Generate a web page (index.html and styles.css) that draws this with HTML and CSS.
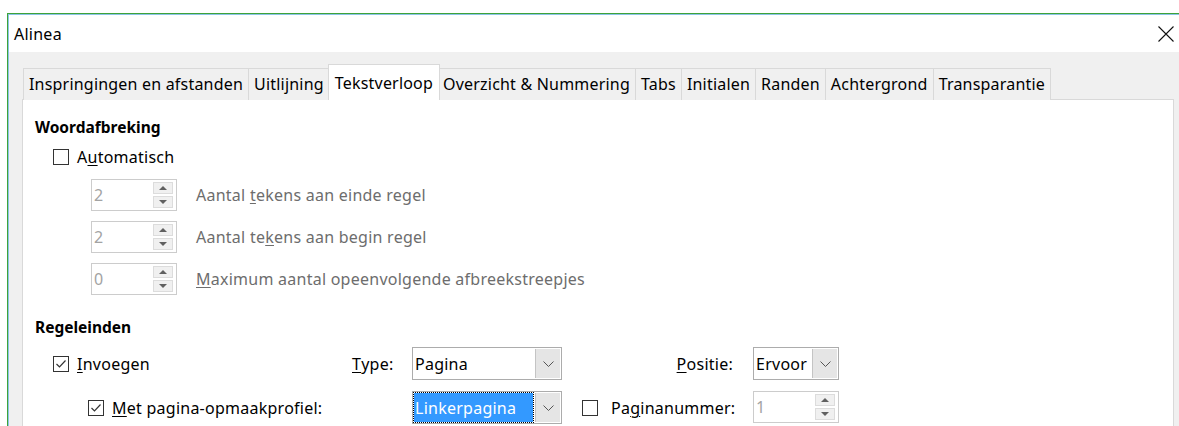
FILE: index.html
```html
<!DOCTYPE html>
<html lang="nl">
<head>
<meta charset="utf-8">
<title>Alinea</title>
<link rel="stylesheet" href="styles.css">
</head>
<body>
<div class="window">
  <div class="frame">
    <div class="titlebar">
      <span class="title">Alinea</span>
      <span class="close" aria-label="Sluiten">
        <svg width="16" height="16" viewBox="0 0 16 16"><path d="M0.5 0.5 L15.5 15.5 M15.5 0.5 L0.5 15.5" stroke="#111" stroke-width="1.1" fill="none"/></svg>
      </span>
    </div>
    <div class="client">
      <div class="tabs">
        <div class="tab">Inspringingen en afstanden</div>
        <div class="tab">Uitlijning</div>
        <div class="tab active">Tekstverloop</div>
        <div class="tab">Overzicht &amp; Nummering</div>
        <div class="tab">Tabs</div>
        <div class="tab">Initialen</div>
        <div class="tab">Randen</div>
        <div class="tab">Achtergrond</div>
        <div class="tab">Transparantie</div>
      </div>
      <div class="panel">
        <h2 class="group-title">Woordafbreking</h2>
        <div class="check-row">
          <span class="checkbox"></span>
          <span>A<u>u</u>tomatisch</span>
        </div>
        <div class="spin-row first">
          <div class="spin disabled">
            <span class="spin-value">2</span>
            <span class="spin-btns"><span class="spin-btn"><i class="arrow-up"></i></span><span class="spin-btn"><i class="arrow-down"></i></span></span>
          </div>
          <span class="spin-label">Aantal <u>t</u>ekens aan einde regel</span>
        </div>
        <div class="spin-row">
          <div class="spin disabled">
            <span class="spin-value">2</span>
            <span class="spin-btns"><span class="spin-btn"><i class="arrow-up"></i></span><span class="spin-btn"><i class="arrow-down"></i></span></span>
          </div>
          <span class="spin-label">Aantal te<u>k</u>ens aan begin regel</span>
        </div>
        <div class="spin-row">
          <div class="spin disabled">
            <span class="spin-value">0</span>
            <span class="spin-btns"><span class="spin-btn"><i class="arrow-up"></i></span><span class="spin-btn"><i class="arrow-down"></i></span></span>
          </div>
          <span class="spin-label"><u>M</u>aximum aantal opeenvolgende afbreekstreepjes</span>
        </div>

        <h2 class="group-title second">Regeleinden</h2>
        <div class="breaks">
          <div class="cell check-cell">
            <span class="checkbox checked"><svg width="14" height="14" viewBox="0 0 14 14"><path d="M2.5 7 L5.5 10 L11.5 3.5" stroke="#333" stroke-width="1.2" fill="none"/></svg></span>
            <span><u>I</u>nvoegen</span>
          </div>
          <div class="cell"><u>T</u>ype:</div>
          <div class="combo">
            <span class="combo-field">Pagina</span>
            <span class="combo-btn"><svg width="11" height="6" viewBox="0 0 11 6"><path d="M0.5 0.5 L5.5 5.5 L10.5 0.5" stroke="#555" fill="none"/></svg></span>
          </div>
          <div class="cell end"><u>P</u>ositie:</div>
          <div class="combo">
            <span class="combo-field">Ervoor</span>
            <span class="combo-btn"><svg width="11" height="6" viewBox="0 0 11 6"><path d="M0.5 0.5 L5.5 5.5 L10.5 0.5" stroke="#555" fill="none"/></svg></span>
          </div>

          <div class="cell check-cell nested">
            <span class="checkbox checked"><svg width="14" height="14" viewBox="0 0 14 14"><path d="M2.5 7 L5.5 10 L11.5 3.5" stroke="#333" stroke-width="1.2" fill="none"/></svg></span>
            <span><u>M</u>et pagina-opmaakprofiel:</span>
          </div>
          <div class="cell"></div>
          <div class="combo focused">
            <span class="combo-field selected">Linkerpagina</span>
            <span class="combo-btn"><svg width="11" height="6" viewBox="0 0 11 6"><path d="M0.5 0.5 L5.5 5.5 L10.5 0.5" stroke="#555" fill="none"/></svg></span>
          </div>
          <div class="cell check-cell page-no">
            <span class="checkbox"></span>
            <span>Pa<u>g</u>inanummer:</span>
          </div>
          <div class="spin disabled">
            <span class="spin-value">1</span>
            <span class="spin-btns"><span class="spin-btn"><i class="arrow-up"></i></span><span class="spin-btn"><i class="arrow-down"></i></span></span>
          </div>
        </div>
      </div>
    </div>
  </div>
</div>
</body>
</html>
```

FILE: styles.css
```css
* {
  box-sizing: border-box;
}

html,
body {
  margin: 0;
}

body {
  background: #fff;
  overflow: hidden;
  padding-top: 13px;
  font-family: "Noto Sans", "Open Sans", "DejaVu Sans", sans-serif;
  font-size: 16px;
  letter-spacing: 0.25px;
  color: #000;
}

u {
  text-decoration-thickness: 1px;
  text-underline-offset: 2px;
}

/* dialog frame: accent border with a light inner edge */
.window {
  margin-left: 7px;
  width: 1181px;
  border: 1px solid #3ea33a;
  border-bottom: 0;
}

.frame {
  border-top: 1px solid #8cc4e6;
  border-left: 1px solid #8cc4e6;
}

.titlebar {
  height: 37px;
  background: #fff;
  display: flex;
  align-items: center;
  justify-content: space-between;
  padding-left: 5px;
  padding-right: 13px;
}

.close {
  display: flex;
}

.client {
  background: #f0f0f0;
  padding: 12px 13px 0 13px;
}

/* tab strip */
.tabs {
  display: flex;
  align-items: flex-end;
  height: 36px;
  margin-bottom: -1px;
  padding-left: 1px;
  position: relative;
  z-index: 1;
  letter-spacing: 0.2px;
}

.tab {
  height: 32px;
  line-height: 30px;
  padding: 0 5px;
  background: #f0f0f0;
  border: 1px solid #d9d9d9;
  border-bottom: 0;
  margin-left: -1px;
  white-space: nowrap;
}

.tab:first-child {
  margin-left: 0;
}

.tab.active {
  height: 36px;
  padding: 3px 6px 2px;
  margin: 0 -2px 0 -2px;
  background: #fff;
  position: relative;
  z-index: 2;
}

.panel {
  background: #fff;
  border: 1px solid #d9d9d9;
  padding: 17px 12px 0 12px;
  height: 340px;
}

.group-title {
  margin: 0;
  font-size: 15.5px;
  font-weight: 700;
  letter-spacing: 0;
  line-height: 20px;
}

.group-title.second {
  margin-top: 22px;
}

.check-row {
  display: flex;
  align-items: center;
  gap: 8px;
  height: 20px;
  margin-top: 10px;
  padding-left: 18px;
}

.checkbox {
  width: 16px;
  height: 16px;
  border: 1px solid #333;
  background: #fff;
  display: inline-flex;
  align-items: center;
  justify-content: center;
  flex: none;
}

/* spin fields */
.spin-row {
  display: flex;
  align-items: center;
  padding-left: 56px;
  margin-top: 10px;
}

.spin-row.first {
  margin-top: 12px;
}

.spin {
  width: 86px;
  height: 32px;
  border: 1px solid #cccccc;
  background: #fff;
  display: flex;
  align-items: center;
}

.spin-value {
  flex: 1;
  padding-left: 2px;
  color: #a3a3a3;
}

.spin-btns {
  display: flex;
  flex-direction: column;
  gap: 2px;
  width: 23px;
  height: 100%;
  padding: 2px 3px 2px 0;
}

.spin-btn {
  flex: 1;
  border: 1px solid #dcdcdc;
  background: #f0f0f0;
  display: flex;
  align-items: center;
  justify-content: center;
}

.arrow-up,
.arrow-down {
  width: 0;
  height: 0;
  border-left: 4px solid transparent;
  border-right: 4px solid transparent;
}

.arrow-up {
  border-bottom: 4px solid #606060;
}

.arrow-down {
  border-top: 4px solid #606060;
}

.spin-label {
  margin-left: 19px;
  color: #6d6d6d;
}

/* line break options */
.breaks {
  display: grid;
  grid-template-columns: 299px 60px 150px 191px 86px;
  grid-auto-rows: 33px;
  row-gap: 11px;
  margin-top: 10px;
  padding-left: 18px;
}

.cell {
  display: flex;
  align-items: center;
  white-space: nowrap;
}

.cell.end {
  justify-content: flex-end;
  padding-right: 20px;
}

.check-cell {
  gap: 8px;
}

.check-cell.nested {
  padding-left: 35px;
}

.check-cell.page-no {
  padding-left: 20px;
  gap: 13px;
}

.combo {
  display: flex;
  border: 1px solid #acacac;
  background: #fff;
}

.combo-field {
  flex: 1;
  display: flex;
  align-items: center;
  padding-left: 2px;
  white-space: nowrap;
  overflow: hidden;
}

.combo-field.selected {
  margin: 1px 2px 1px 1px;
  padding-left: 1px;
  background: #3399ff;
  color: #fff;
  outline: 1px dotted #000;
}

.combo-btn {
  width: 25px;
  border-left: 1px solid #c4c4c4;
  background: #e5e5e5;
  display: flex;
  align-items: center;
  justify-content: center;
  margin: 1px;
  margin-left: 0;
}
```
